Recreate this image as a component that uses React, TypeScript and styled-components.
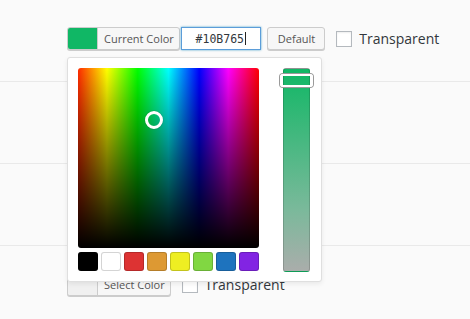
import React from "react";
import styled, { createGlobalStyle } from "styled-components";

const GlobalStyle = createGlobalStyle`
  html, body { margin: 0; padding: 0; background: #fafafa; }
  body { font-family: "Open Sans", "Noto Sans", sans-serif; color: #32373c; }
  * { box-sizing: border-box; }
`;

const Page = styled.div`
  width: 470px;
  height: 319px;
  overflow: hidden;
  background: #fafafa;
`;

const Row = styled.div`
  height: 82px;
  border-bottom: 1px solid #e9e9e9;
  padding: 27px 0 0 67px;
  display: flex;
  align-items: flex-start;
  &:last-child { border-bottom: none; }
`;

const Field = styled.div`
  position: relative;
  display: flex;
  align-items: center;
  height: 23px;
`;

const ColorButton = styled.div`
  display: flex;
  height: 23px;
  border: 1px solid #ccc;
  border-radius: 3px;
  box-shadow: 0 1px 0 #ccc;
  background: #f7f7f7;
  overflow: hidden;
`;

const Swatch = styled.span<{ $color: string }>`
  width: 30px;
  background: ${(p) => p.$color};
  border-right: 1px solid #ccc;
`;

const ButtonLabel = styled.span`
  padding: 0 5px 0 6px;
  font-size: 11px;
  line-height: 21px;
  color: #555;
  white-space: nowrap;
`;

const HexField = styled.div`
  margin-left: 1px;
  width: 80px;
  height: 23px;
  border: 1px solid #5b9dd9;
  box-shadow: 0 0 2px rgba(30, 140, 190, 0.8);
  background: #fff;
  display: flex;
  align-items: center;
  justify-content: center;
  font-family: "DejaVu Sans Mono", "Liberation Mono", monospace;
  font-size: 11.5px;
  color: #32373c;
`;

const Caret = styled.span`
  display: inline-block;
  width: 1px;
  height: 13px;
  background: #222;
  margin-left: 1px;
`;

const Button = styled.div`
  margin-left: 6px;
  height: 23px;
  padding: 0 9px 0 10px;
  border: 1px solid #ccc;
  border-radius: 3px;
  box-shadow: 0 1px 0 #ccc;
  background: #f7f7f7;
  font-size: 11px;
  line-height: 21px;
  color: #555;
`;

const Check = styled.span`
  margin-left: 11px;
  width: 16px;
  height: 16px;
  border: 1px solid #b4b9be;
  background: #fff;
  box-shadow: inset 0 1px 2px rgba(0, 0, 0, 0.07);
`;

const CheckLabel = styled.span`
  margin-left: 7px;
  font-size: 14px;
  color: #32373c;
  line-height: 16px;
`;

const Popup = styled.div`
  position: absolute;
  left: 0;
  top: 30px;
  z-index: 10;
  width: 255px;
  height: 225px;
  background: #fff;
  border: 1px solid #dfdfdf;
  border-radius: 3px;
  box-shadow: 0 2px 5px rgba(0, 0, 0, 0.07);
  padding: 10px 11px 10px 10px;
  display: flex;
  gap: 24px;
`;

const LeftCol = styled.div`
  display: flex;
  flex-direction: column;
  gap: 4px;
`;

const Square = styled.div`
  position: relative;
  width: 181px;
  height: 181px;
  border-radius: 3px;
  background: linear-gradient(to bottom, rgba(0, 0, 0, 0), #000),
    linear-gradient(
      to right,
      #ff2a00,
      #ffff00 16%,
      #00ff00 33%,
      #00ffff 50%,
      #0000ff 67%,
      #ff00ff 83%,
      #ff0000
    );
`;

const Pointer = styled.span`
  position: absolute;
  left: 76px;
  top: 52px;
  width: 18px;
  height: 18px;
  transform: translate(-50%, -50%);
  border: 3px solid #fff;
  border-radius: 50%;
  box-shadow: 0 0 1px rgba(0, 0, 0, 0.5);
`;

const Palette = styled.div`
  display: flex;
  justify-content: space-between;
`;

const PaletteItem = styled.span<{ $color: string }>`
  width: 20px;
  height: 19px;
  border-radius: 3px;
  background: ${(p) => p.$color};
  box-shadow: inset 0 0 0 1px
    ${(p) => (p.$color === "#fff" ? "#d4d4d4" : "rgba(0,0,0,0.18)")};
`;

const Strip = styled.div`
  position: relative;
  width: 27px;
  height: 204px;
  border-radius: 3px;
  border: 1px solid rgba(0, 0, 0, 0.15);
  background: linear-gradient(to bottom, #10b765, #7bb99b 70%, #aaadab);
`;

const Handle = styled.span`
  position: absolute;
  top: 5px;
  left: -4px;
  width: 33px;
  height: 13px;
  border: 2px solid #fff;
  border-radius: 3px;
  box-shadow: 0 0 0 1px #9a9a9a;
`;

const palette = ["#000", "#fff", "#dd3333", "#dd9933", "#eeee22", "#81d742", "#1e73be", "#8224e3"];

export default function App() {
  return (
    <Page>
      <GlobalStyle />
      <Row>
        <Field>
          <ColorButton>
            <Swatch $color="#10b765" />
            <ButtonLabel>Current Color</ButtonLabel>
          </ColorButton>
          <HexField>
            #10B765
            <Caret />
          </HexField>
          <Button>Default</Button>
          <Check />
          <CheckLabel>Transparent</CheckLabel>
          <Popup>
            <LeftCol>
              <Square>
                <Pointer />
              </Square>
              <Palette>
                {palette.map((c) => (
                  <PaletteItem key={c} $color={c} />
                ))}
              </Palette>
            </LeftCol>
            <Strip>
              <Handle />
            </Strip>
          </Popup>
        </Field>
      </Row>
      <Row />
      <Row />
      <Row>
        <Field>
          <ColorButton>
            <Swatch $color="#f0f0f0" />
            <ButtonLabel>Select Color</ButtonLabel>
          </ColorButton>
          <Check />
          <CheckLabel>Transparent</CheckLabel>
        </Field>
      </Row>
    </Page>
  );
}
